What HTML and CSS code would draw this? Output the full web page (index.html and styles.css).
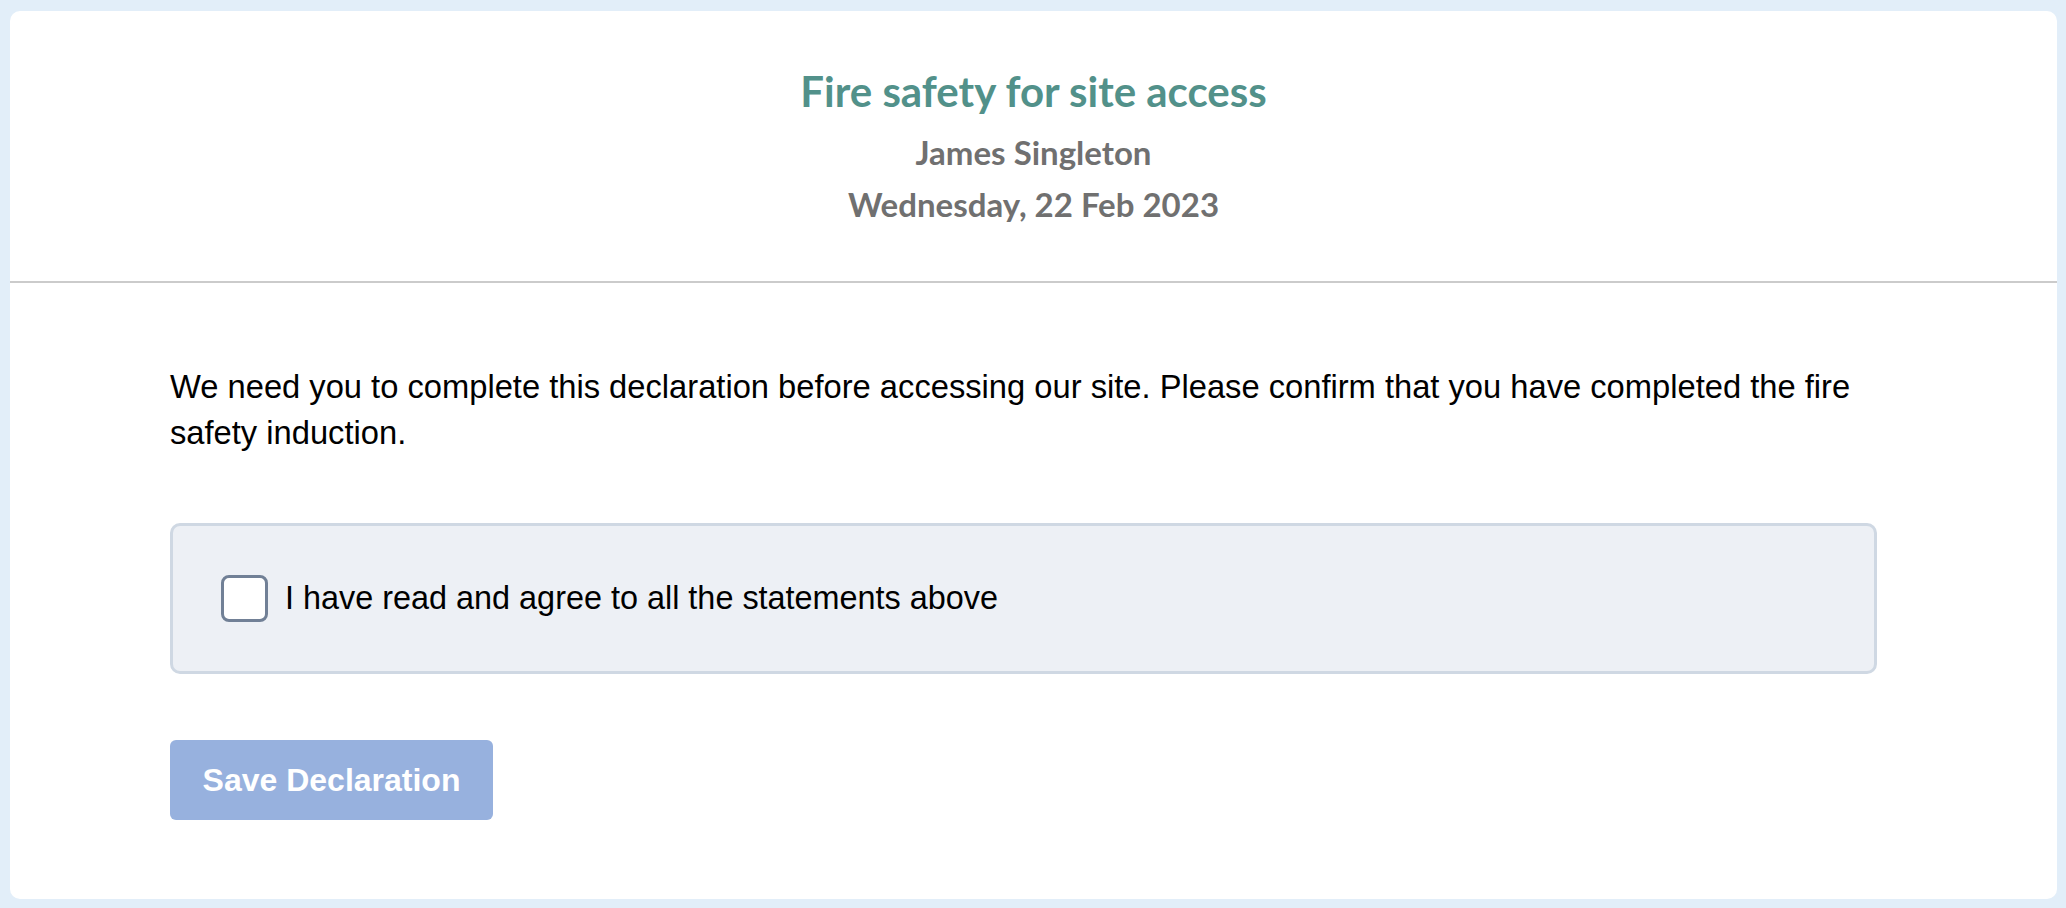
FILE: index.html
```html
<!DOCTYPE html>
<html lang="en">
<head>
<meta charset="utf-8">
<title>Fire safety for site access</title>
<link rel="stylesheet" href="styles.css">
</head>
<body>
  <main class="card">
    <header class="card-header">
      <h1 class="title">Fire safety for site access</h1>
      <div class="name">James Singleton</div>
      <div class="date">Wednesday, 22 Feb 2023</div>
    </header>
    <section class="card-body">
      <p class="intro">We need you to complete this declaration before accessing our site. Please confirm that you have completed the fire safety induction.</p>
      <label class="agree">
        <span class="checkbox"></span>
        <span class="agree-text">I have read and agree to all the statements above</span>
      </label>
      <div class="actions">
        <button class="save-btn" type="button" disabled>Save Declaration</button>
      </div>
    </section>
  </main>
</body>
</html>
```

FILE: styles.css
```css
html, body {
  margin: 0;
  padding: 0;
}

body {
  background: #e2eef9;
  padding: 11px 9px 9px 10px;
  box-sizing: border-box;
  height: 908px;
  font-family: "Liberation Sans", Arial, sans-serif;
  color: #000;
}

.card {
  background: #fff;
  border-radius: 10px;
  height: 888px;
  display: flex;
  flex-direction: column;
}

.card-header {
  padding: 51px 0 57px;
  text-align: center;
  border-bottom: 2px solid #cbcbcb;
  font-family: Lato, "Open Sans", sans-serif;
  font-weight: 700;
}

.title {
  margin: 0;
  font-size: 42px;
  line-height: 58px;
  font-weight: 700;
  color: #52918a;
}

.name {
  font-size: 33px;
  line-height: 64px;
  color: #707070;
}

.date {
  font-size: 33px;
  line-height: 40px;
  color: #707070;
}

.card-body {
  padding: 81px 180px 0 160px;
  display: flex;
  flex-direction: column;
}

.intro {
  margin: 0;
  font-size: 32.7px;
  line-height: 46px;
}

.agree {
  margin-top: 67px;
  height: 151px;
  box-sizing: border-box;
  border: 3px solid #cfd8e3;
  border-radius: 10px;
  background: #edf0f5;
  display: flex;
  align-items: center;
  gap: 17px;
  padding: 0 48px 0 48px;
}

.checkbox {
  width: 47px;
  height: 47px;
  box-sizing: border-box;
  border: 3px solid #718096;
  border-radius: 8px;
  background: #fff;
  flex: none;
}

.agree-text {
  font-size: 32.4px;
}

.actions {
  margin-top: 66px;
  display: flex;
}

.save-btn {
  width: 323px;
  height: 80px;
  border: none;
  border-radius: 6px;
  background: #97b1de;
  color: #fff;
  font-family: "Liberation Sans", Arial, sans-serif;
  font-weight: 700;
  font-size: 32px;
  padding: 0;
}
```
